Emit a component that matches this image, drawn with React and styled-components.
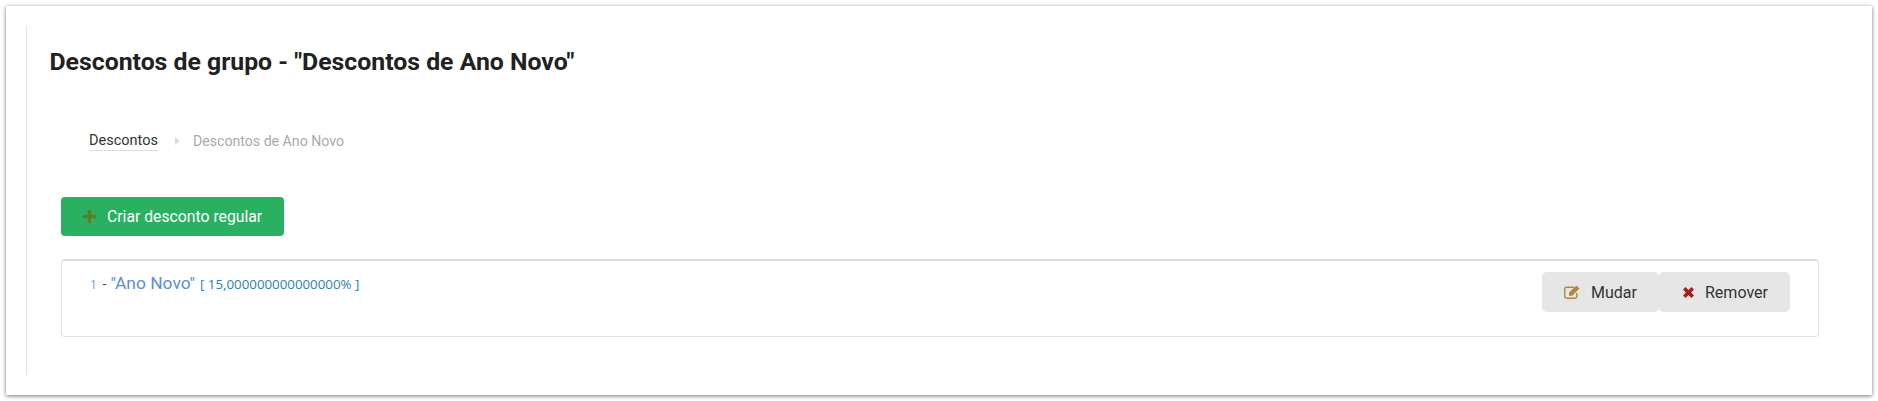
import React from "react";
import styled, { createGlobalStyle } from "styled-components";

const Global = createGlobalStyle`
  html, body { margin: 0; padding: 0; background: #fff; }
  body { font-family: Roboto, "Liberation Sans", sans-serif; }
`;
const Page = styled.div`
  height: 401px;
  box-sizing: border-box;
  padding: 6px;
`;
const Panel = styled.main`
  height: 389px;
  box-sizing: border-box;
  padding: 20px;
  background: #fff;
  box-shadow: 0 1px 4px rgba(0, 0, 0, 0.55);
`;
const Inner = styled.div`
  height: 349px;
  box-sizing: border-box;
  border-left: 1px solid #e4e4e4;
  padding: 0 33px 0 23px;
`;
const Title = styled.h1`
  margin: 0 0 0 -0.5px;
  padding-top: 20px;
  font-size: 24.8px;
  line-height: 32px;
  font-weight: 700;
  color: #212121;
`;
const Crumbs = styled.nav`
  display: flex;
  align-items: center;
  margin-top: 51px;
  padding-left: 39px;
  height: 24px;
  font-size: 14.5px;
`;
const CrumbLink = styled.a`
  color: #333;
  line-height: 19px;
  border-bottom: 1px solid #ddd;
`;
const Sep = styled.svg`
  width: 5px;
  height: 8px;
  margin: 0 13px 0 17px;
  fill: #ddd;
`;
const CrumbCurrent = styled.span`
  color: #aaa;
  font-size: 14.15px;
`;
const Primary = styled.button`
  display: flex;
  align-items: center;
  width: 223px;
  height: 39px;
  margin: 44px 0 0 11px;
  padding: 0 0 0 22px;
  box-sizing: border-box;
  border: none;
  border-radius: 4px;
  background: #2ab061;
  color: #fff;
  font: 400 15.75px Roboto, sans-serif;
`;
const PlusIcon = styled.svg`
  width: 13px;
  height: 13px;
  margin-right: 11px;
  fill: #5c7f25;
`;
const Card = styled.section`
  display: flex;
  justify-content: space-between;
  align-items: flex-start;
  height: 78px;
  box-sizing: border-box;
  margin: 23px 0 0 11px;
  padding: 11px 28px 0 28px;
  border: 1px solid #e2e2e2;
  border-top: 2px solid #dcdcdc;
  border-radius: 4px;
`;
const Line = styled.div`
  display: flex;
  align-items: baseline;
  color: #555;
  white-space: pre;
  font-size: 15px;
  margin-top: 1px;
`;
const Num = styled.span`
  color: #6f9ee0;
  font-family: "Open Sans", sans-serif;
  font-size: 12px;
  margin-right: 2px;
`;
const Name = styled.a`
  color: #5b8dd9;
  font-size: 17.4px;
`;
const Meta = styled.span`
  color: #2f7fa8;
  font-family: "Open Sans", sans-serif;
  font-size: 13.3px;
  margin-left: 5px;
`;
const Actions = styled.div`
  display: flex;
`;
const ActionButton = styled.button`
  display: flex;
  align-items: center;
  height: 40px;
  width: ${(p) => p.$w}px;
  padding: 0 0 0 ${(p) => p.$pad}px;
  box-sizing: border-box;
  border: none;
  border-radius: 5px;
  background: #e6e6e6;
  color: #333;
  font: 400 16px Roboto, sans-serif;
`;
const ActionIcon = styled.svg`
  width: ${(p) => p.$w}px;
  height: ${(p) => p.$h}px;
  margin-right: ${(p) => p.$m}px;
  flex: none;
`;

export default function App() {
  return (
    <>
      <Global />
      <Page>
        <Panel>
          <Inner>
            <Title>Descontos de grupo - "Descontos de Ano Novo"</Title>
            <Crumbs>
              <CrumbLink>Descontos</CrumbLink>
              <Sep viewBox="0 0 5 8"><path d="M0 0l5 4-5 4z" /></Sep>
              <CrumbCurrent>Descontos de Ano Novo</CrumbCurrent>
            </Crumbs>
            <Primary>
              <PlusIcon viewBox="0 0 13 13"><path d="M4.800 0h3.400v4.800H13v3.400H8.200V13H4.800V8.200H0V4.800h4.800z" /></PlusIcon>
              Criar desconto regular
            </Primary>
            <Card>
              <Line>
                <Num>1</Num> - <Name>"Ano Novo"</Name>
                <Meta>[ 15,000000000000000% ]</Meta>
              </Line>
              <Actions>
                <ActionButton $w={117} $pad={22}>
                  <ActionIcon $w={16} $h={14} $m={11} viewBox="0 0 16 14" fill="none">
                    <path d="M12.800 8v3a2.300 2.300 0 0 1-2.300 2.300H3A2.300 2.300 0 0 1 .7 11V4.500A2.300 2.300 0 0 1 3 2.200h7" stroke="#ad8b3a" strokeWidth="1.4" />
                    <path d="M5 7.500L12.300.4l3.200 3.100-7.300 7.200H5z" fill="#ad8b3a" />
                  </ActionIcon>
                  Mudar
                </ActionButton>
                <ActionButton $w={131} $pad={24}>
                  <ActionIcon $w={11} $h={11} $m={11} viewBox="0 0 12 12">
                    <path d="M2.800 0L6 3.200 9.200 0 12 2.800 8.800 6 12 9.200 9.200 12 6 8.800 2.800 12 0 9.200 3.200 6 0 2.800z" fill="#a81c1c" />
                  </ActionIcon>
                  Remover
                </ActionButton>
              </Actions>
            </Card>
          </Inner>
        </Panel>
      </Page>
    </>
  );
}
